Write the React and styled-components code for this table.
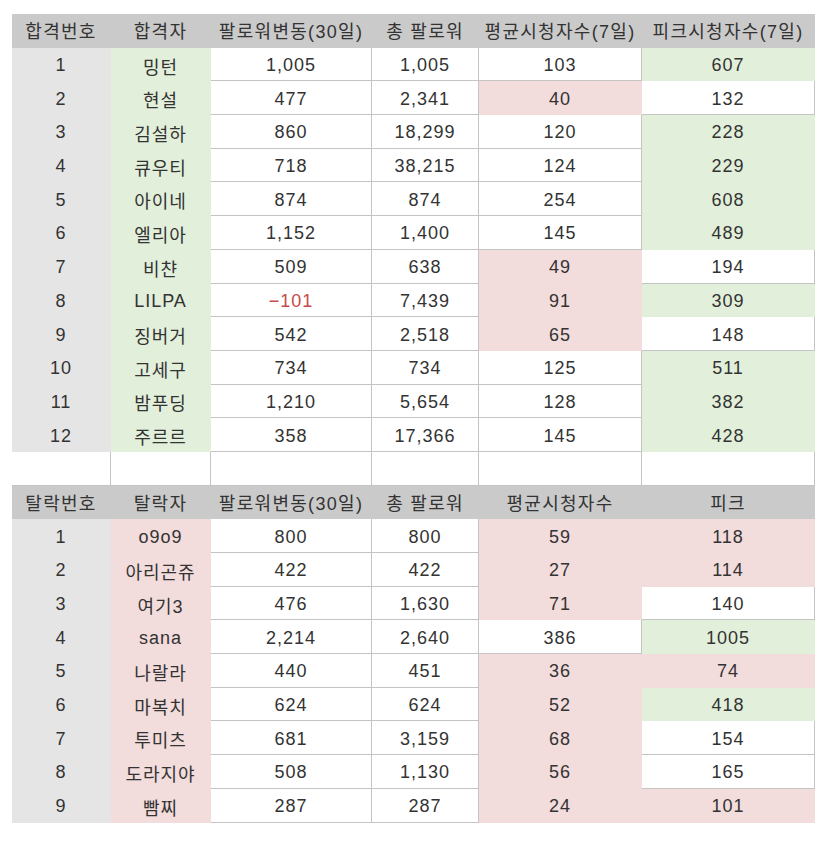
import React from "react";
import styled, { createGlobalStyle } from "styled-components";

const Global = createGlobalStyle`
  html, body { margin: 0; padding: 0; background: #ffffff; }
  body { font-family: "Liberation Sans", "Noto Sans CJK KR", Arial, sans-serif; }
`;

const Page = styled.div`
  width: 830px;
  height: 843px;
  padding: 14px 0 0 12px;
  box-sizing: border-box;
  background: #fff;
`;

const Sheet = styled.div`
  display: grid;
  grid-template-columns: 99px 100px 161px 107px 163px 173px;
  grid-auto-rows: 33.7px;
  width: 803px;
`;

const fills = {
  head: "#cacaca",
  index: "#e5e5e5",
  green: "#e2efda",
  red: "#f2dcdc",
  white: "#ffffff",
};

const Cell = styled.div`
  display: flex;
  align-items: center;
  justify-content: center;
  box-sizing: border-box;
  background: ${(p) => fills[p.$tone]};
  border-right: 1px solid ${(p) => (p.$tone === "white" ? "#c4c4c4" : "transparent")};
  border-bottom: 1px solid ${(p) => (p.$tone === "white" ? "#c4c4c4" : "transparent")};
  color: ${(p) => (p.$neg ? "#c84a4a" : "#333333")};
  font-size: 18px;
  letter-spacing: ${(p) => (p.$tone === "head" ? "1.3px" : "1px")};
  white-space: nowrap;
  padding-top: ${(p) => (p.$tone === "head" ? "0" : "3px")};
`;

const top = [
  ["1", "밍턴", "1,005", "1,005", ["103", "white"], ["607", "green"]],
  ["2", "현설", "477", "2,341", ["40", "red"], ["132", "white"]],
  ["3", "김설하", "860", "18,299", ["120", "white"], ["228", "green"]],
  ["4", "큐우티", "718", "38,215", ["124", "white"], ["229", "green"]],
  ["5", "아이네", "874", "874", ["254", "white"], ["608", "green"]],
  ["6", "엘리아", "1,152", "1,400", ["145", "white"], ["489", "green"]],
  ["7", "비챤", "509", "638", ["49", "red"], ["194", "white"]],
  ["8", "LILPA", "−101", "7,439", ["91", "red"], ["309", "green"]],
  ["9", "징버거", "542", "2,518", ["65", "red"], ["148", "white"]],
  ["10", "고세구", "734", "734", ["125", "white"], ["511", "green"]],
  ["11", "밤푸딩", "1,210", "5,654", ["128", "white"], ["382", "green"]],
  ["12", "주르르", "358", "17,366", ["145", "white"], ["428", "green"]],
];

const bottom = [
  ["1", "o9o9", "800", "800", ["59", "red"], ["118", "red"]],
  ["2", "아리곤쥬", "422", "422", ["27", "red"], ["114", "red"]],
  ["3", "여기3", "476", "1,630", ["71", "red"], ["140", "white"]],
  ["4", "sana", "2,214", "2,640", ["386", "white"], ["1005", "green"]],
  ["5", "나랄라", "440", "451", ["36", "red"], ["74", "red"]],
  ["6", "마복치", "624", "624", ["52", "red"], ["418", "green"]],
  ["7", "투미츠", "681", "3,159", ["68", "red"], ["154", "white"]],
  ["8", "도라지야", "508", "1,130", ["56", "red"], ["165", "white"]],
  ["9", "빰찌", "287", "287", ["24", "red"], ["101", "red"]],
];

const HeaderRow = ({ labels }) =>
  labels.map((l, i) => (
    <Cell key={"h" + i + l} $tone="head">
      {l}
    </Cell>
  ));

const DataRow = ({ row, nameTone }) => {
  const [n, name, change, total, avg, peak] = row;
  return (
    <>
      <Cell $tone="index">{n}</Cell>
      <Cell $tone={nameTone}>{name}</Cell>
      <Cell $tone="white" $neg={change.startsWith("−")}>{change}</Cell>
      <Cell $tone="white">{total}</Cell>
      <Cell $tone={avg[1]}>{avg[0]}</Cell>
      <Cell $tone={peak[1]}>{peak[0]}</Cell>
    </>
  );
};

export default function App() {
  return (
    <>
      <Global />
      <Page>
        <Sheet>
          <HeaderRow
            labels={["합격번호", "합격자", "팔로워변동(30일)", "총 팔로워", "평균시청자수(7일)", "피크시청자수(7일)"]}
          />
          {top.map((r) => (
            <DataRow key={"t" + r[0]} row={r} nameTone="green" />
          ))}
          {[0, 1, 2, 3, 4, 5].map((i) => (
            <Cell key={"e" + i} $tone="white" />
          ))}
          <HeaderRow
            labels={["탈락번호", "탈락자", "팔로워변동(30일)", "총 팔로워", "평균시청자수", "피크"]}
          />
          {bottom.map((r) => (
            <DataRow key={"b" + r[0]} row={r} nameTone="red" />
          ))}
        </Sheet>
      </Page>
    </>
  );
}
